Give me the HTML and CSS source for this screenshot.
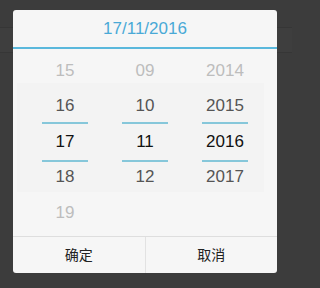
FILE: index.html
```html
<!DOCTYPE html>
<html>
<head>
<meta charset="utf-8">
<link rel="stylesheet" href="styles.css">
</head>
<body>
<div class="backdrop">
  <div class="band"></div>
</div>
<div class="dialog">
  <div class="header">17/11/2016</div>
  <div class="wheels">
    <div class="shade"></div>
    <div class="col">
      <div class="row far">15</div>
      <div class="row">16</div>
      <div class="row sel">17</div>
      <div class="row">18</div>
      <div class="row far">19</div>
      <div class="mark top"></div>
      <div class="mark bottom"></div>
    </div>
    <div class="col">
      <div class="row far">09</div>
      <div class="row">10</div>
      <div class="row sel">11</div>
      <div class="row">12</div>
      <div class="row far"></div>
      <div class="mark top"></div>
      <div class="mark bottom"></div>
    </div>
    <div class="col">
      <div class="row far">2014</div>
      <div class="row">2015</div>
      <div class="row sel">2016</div>
      <div class="row">2017</div>
      <div class="row far"></div>
      <div class="mark top"></div>
      <div class="mark bottom"></div>
    </div>
  </div>
  <div class="footer">
    <div class="btn">确定</div>
    <div class="btn">取消</div>
  </div>
</div>
</body>
</html>
```

FILE: styles.css
```css
html, body {
  margin: 0;
  padding: 0;
}
body {
  width: 292px;
  height: 288px;
  background: #3c3c3c;
  font-family: "Liberation Sans", Arial, "Noto Sans CJK SC", sans-serif;
  position: relative;
  overflow: hidden;
}
.backdrop {
  position: absolute;
  left: 0;
  top: 0;
  width: 292px;
  height: 288px;
}
.band {
  margin-top: 27px;
  height: 24px;
  border-top: 1px solid #363636;
  border-bottom: 1px solid #363636;
  background: #3e3e3e;
}
.dialog {
  position: absolute;
  left: 13px;
  top: 10px;
  width: 264px;
  height: 263px;
  background: #f6f6f6;
  border-radius: 3px;
  display: flex;
  flex-direction: column;
  overflow: hidden;
}
.header {
  height: 37px;
  line-height: 38px;
  text-align: center;
  font-size: 17px;
  color: #49a9d6;
  border-bottom: 2px solid #5ab8dc;
}
.wheels {
  position: relative;
  flex: 1;
  display: flex;
  padding-top: 3.5px;
  padding-left: 12px;
}
.shade {
  position: absolute;
  left: 4px;
  top: 34px;
  width: 247px;
  height: 109px;
  background: #f3f3f3;
}
.col {
  position: relative;
  width: 80px;
  display: flex;
  flex-direction: column;
}
.row {
  height: 35.5px;
  line-height: 35.5px;
  text-align: center;
  font-size: 17px;
  color: #555;
  position: relative;
}
.row.far {
  color: #bdbdbd;
}
.row.sel {
  color: #111;
}
.mark {
  position: absolute;
  left: 17px;
  width: 46px;
  height: 2px;
  background: #86c7da;
}
.mark.top {
  top: 69px;
}
.mark.bottom {
  top: 107px;
}
.footer {
  height: 36px;
  border-top: 1px solid #dedede;
  display: flex;
}
.btn {
  flex: 1;
  text-align: center;
  line-height: 37px;
  font-size: 14px;
  color: #222;
}
.btn + .btn {
  border-left: 1px solid #e2e2e2;
}
```
